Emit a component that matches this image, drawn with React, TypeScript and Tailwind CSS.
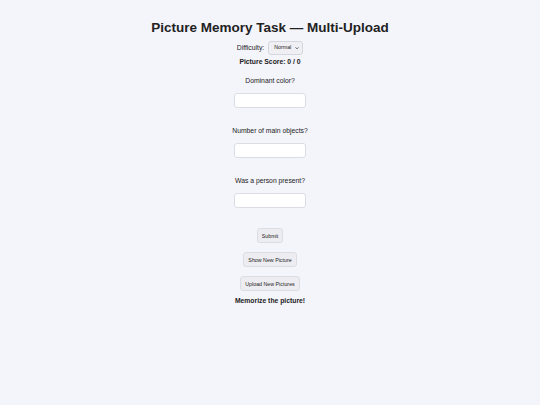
import { useState } from "react";

const questions = ["Dominant color?", "Number of main objects?", "Was a person present?"];

function SmallButton({ children }: { children: React.ReactNode }) {
  return (
    <button className="rounded-[3px] border border-[#dcdce4] bg-[#ededf1] px-[4px] py-[3.5px] text-[5.3px] leading-[6px] text-[#222]">
      {children}
    </button>
  );
}

export default function App() {
  const [answers, setAnswers] = useState<string[]>(["", "", ""]);

  return (
    <div className="min-h-[405px] w-full bg-[#f4f4fb] font-['Liberation_Sans',Arial,sans-serif] text-[#222]">
      <div className="flex flex-col items-center pt-[18px]">
        <h1 className="text-[13.5px] font-bold leading-[20px] text-[#222]">Picture Memory Task — Multi-Upload</h1>

        <div className="mt-[3px] flex items-center gap-[4px] text-[6.8px]">
          <label>Difficulty:</label>
          <div className="relative">
            <select className="h-[14px] w-[35px] appearance-none rounded-[3px] border border-[#d6d6de] bg-[#f0f0f4] pl-[5px] text-[5.3px] outline-none">
              <option>Normal</option>
              <option>Easy</option>
              <option>Hard</option>
            </select>
            <svg
              viewBox="0 0 10 10"
              className="pointer-events-none absolute right-[4px] top-[5px] h-[4px] w-[4px]"
              fill="none"
              stroke="#333"
              strokeWidth="2"
            >
              <path d="M1.5 3.5 5 7l3.5-3.5" />
            </svg>
          </div>
        </div>

        <p className="mt-[2px] text-[6.8px] font-bold leading-[10px]">Picture Score: 0 / 0</p>

        {questions.map((q, i) => (
          <div key={q} className="mt-[9px] flex flex-col items-center first:mt-[8px]">
            <label className="text-[6.8px] leading-[10px]">{q}</label>
            <input
              value={answers[i]}
              onChange={(e) => setAnswers(answers.map((a, j) => (j === i ? e.target.value : a)))}
              className="mt-[7px] mb-[9px] h-[15px] w-[72px] rounded-[3px] border border-[#dcdce6] bg-white px-1 text-[7px] outline-none"
            />
          </div>
        ))}

        <div className="mt-[11px] flex flex-col items-center gap-[9px]">
          <SmallButton>Submit</SmallButton>
          <SmallButton>Show New Picture</SmallButton>
          <SmallButton>Upload New Pictures</SmallButton>
        </div>

        <p className="mt-[5px] text-[6.8px] font-bold leading-[10px]">Memorize the picture!</p>
      </div>
    </div>
  );
}
